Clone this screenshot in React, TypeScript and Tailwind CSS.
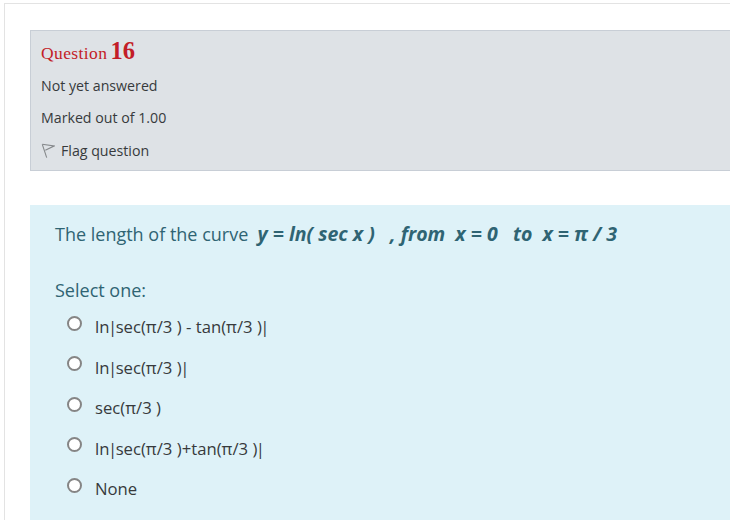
import React from "react";

const options = [
  ["ln", "sec(π/3 ) - tan(π/3 )", ""],
  ["ln", "sec(π/3 )", ""],
  ["", "sec(π/3 )"],
  ["ln", "sec(π/3 )+tan(π/3 )", ""],
  ["", "None"],
];

function FlagIcon() {
  return (
    <svg width="14" height="16" viewBox="0 0 14 16" fill="none" stroke="#85888b" strokeWidth="1.1">
      <path d="M1.3 1.3 L5.7 14.7" />
      <path d="M1.3 1.3 L13 3 L4.3 7.2" />
    </svg>
  );
}

function Pipe() {
  return <span className="mx-[-1.5px]">|</span>;
}

export default function App() {
  return (
    <div className="h-[520px] w-[730px] overflow-hidden bg-white pl-1 pt-[3px] font-['Open_Sans',sans-serif]">
      <div className="h-[517px] border-l border-t border-[#e3e3e3] pl-[25px] pt-[26px]">
        <div className="h-[141px] border-y border-l border-[#c8ced6] bg-[#dee2e6] pl-[10px] pt-[2px] text-[14.2px] text-[#373a3c]">
          <h3 className="flex h-[35px] items-baseline font-['Liberation_Serif',serif] text-[#c31d28]">
            <span className="text-[17.5px] tracking-[0.4px]">Question</span>
            <span className="ml-[3px] text-[24.5px] font-bold">16</span>
          </h3>
          <div className="mt-[8px] h-[20px] leading-[20px]">Not yet answered</div>
          <div className="mt-[12px] h-[20px] leading-[20px]">Marked out of 1.00</div>
          <div className="mt-[13px] flex h-[20px] items-center leading-[20px]">
            <FlagIcon />
            <span className="ml-[6px]">Flag question</span>
          </div>
        </div>
        <div className="mt-[34px] h-[315px] bg-[#def2f8] pl-[25px] pt-[17px] text-[#2f6473]">
          <p className="h-[24px] whitespace-pre text-[18px] leading-[24px]">
            The length of the curve{"  "}
            <b className="text-[19.5px] italic">y = ln( sec x )   , from  x = 0   to  x = π / 3</b>
          </p>
          <p className="mt-[32px] h-[24px] text-[18px] leading-[24px]">Select one:</p>
          <div className="mt-[12px] flex flex-col gap-[13.5px] pl-[12px]">
            {options.map(([before, middle, after], i) => (
              <label key={i} className="flex h-[27px] items-center text-[#373a3c]">
                <span className="mb-[9px] h-[15px] w-[15px] shrink-0 rounded-full border-2 border-[#858585] bg-white" />
                <span className="mb-[2px] ml-[13px] whitespace-pre text-[16.7px] leading-[27px]">
                  {before}
                  {before && <Pipe />}
                  {middle}
                  {after !== undefined && <Pipe />}
                </span>
              </label>
            ))}
          </div>
        </div>
      </div>
    </div>
  );
}
